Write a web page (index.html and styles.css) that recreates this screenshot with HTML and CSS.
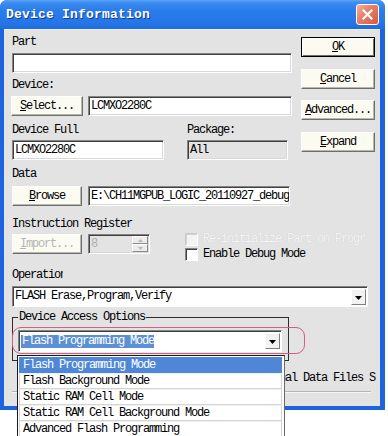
FILE: index.html
```html
<!DOCTYPE html>
<html>
<head>
<meta charset="utf-8">
<link rel="stylesheet" href="styles.css">
</head>
<body>
<div class="window">
  <div class="titlebar">
    <span class="title">Device Information</span>
    <span class="close"><svg width="13" height="13" viewBox="0 0 13 13"><path d="M2.5 2.5L10.5 10.5M10.5 2.5L2.5 10.5" stroke="#fff" stroke-width="2.2" stroke-linecap="square"/></svg></span>
  </div>
  <div class="client">
    <div class="top">
      <div class="left">
        <div class="label">Part</div>
        <div class="field part-field mt4"></div>
        <div class="label mt6">Device:</div>
        <div class="row mt4">
          <div class="btn btn-left"><span><u>S</u>elect...</span></div>
          <div class="field dev-field">LCMXO2280C</div>
        </div>
        <div class="row mt8">
          <div class="label full-label">Device Full</div>
          <div class="label">Package:</div>
        </div>
        <div class="row mt3">
          <div class="field full-field">LCMXO2280C</div>
          <div class="field pkg-field">All</div>
        </div>
      </div>
      <div class="right">
        <div class="btn btn-right default"><span><u>O</u>K</span></div>
        <div class="btn btn-right mt12"><span><u>C</u>ancel</span></div>
        <div class="btn btn-right mt11"><span><u>A</u>dvanced...</span></div>
        <div class="btn btn-right mt12"><span><u>E</u>xpand</span></div>
      </div>
    </div>

    <div class="label mt8">Data</div>
    <div class="row mt5">
      <div class="btn btn-left2"><span><u>B</u>rowse</span></div>
      <div class="field data-field">E:\CH11MGPUB_LOGIC_20110927_debug</div>
    </div>

    <div class="label mt12">Instruction Register</div>
    <div class="row ir-row mt3">
      <div class="btn btn-left2 disabled"><span><u>I</u>mport...</span></div>
      <div class="field spin-field">
        <span class="spin-val">8</span>
        <div class="spin">
          <div class="spin-btn"><svg width="5" height="3" viewBox="0 0 5 3"><path d="M0 3L2.5 0L5 3Z" fill="#b8b8b8"/></svg></div>
          <div class="spin-btn"><svg width="5" height="3" viewBox="0 0 5 3"><path d="M0 0L5 0L2.5 3Z" fill="#b8b8b8"/></svg></div>
        </div>
      </div>
      <div class="checks">
        <div class="check-row">
          <span class="checkbox cb-disabled"></span>
          <span class="check-label dis-text">Re-initialize Part on Progr</span>
        </div>
        <div class="check-row mt2">
          <span class="checkbox"></span>
          <span class="check-label">Enable Debug Mode</span>
        </div>
      </div>
    </div>

    <div class="label op-label mt8">Operatio<span class="cut">n</span></div>
    <div class="combo op-combo mt4">
      <span class="combo-text">FLASH Erase,Program,Verify</span>
      <span class="arrow"><svg width="7" height="4" viewBox="0 0 7 4"><path d="M0 0H7L3.5 4Z" fill="#000"/></svg></span>
    </div>

    <fieldset class="group mt4">
      <legend>Device Access Options</legend>
      <div class="combo dao-combo">
        <span class="combo-text"><span class="hl">Flash Programming Mode</span></span>
        <span class="arrow"><svg width="7" height="4" viewBox="0 0 7 4"><path d="M0 0H7L3.5 4Z" fill="#000"/></svg></span>
      </div>
    </fieldset>

    <div class="bottom-row">
      <svg class="tri" width="8" height="9" viewBox="0 0 8 9"><path d="M0 0L8 4.5L0 9Z" fill="#000"/></svg>
      <span class="ext-text">nal Data Files S</span>
    </div>
    <div class="sep"></div>
  </div>

  <div class="annot"></div>

  <div class="list">
    <div class="item selected">Flash Programming Mode</div>
    <div class="item">Flash Background Mode</div>
    <div class="item">Static RAM Cell Mode</div>
    <div class="item">Static RAM Cell Background Mode</div>
    <div class="item">Advanced Flash Programming</div>
  </div>
</div>
</body>
</html>
```

FILE: styles.css
```css
* { box-sizing: border-box; }

html, body {
  min-height: 436px;
}

body {
  margin: 0;
  background: #fff;
  font-family: "Liberation Mono", "DejaVu Sans Mono", monospace;
  font-size: 12px;
  letter-spacing: -1.2px;
  line-height: 13px;
  color: #000;
}

.window {
  position: relative;
  width: 385px;
  height: 410px;
  background: #1d63de;
  border-radius: 7px 7px 0 0;
  padding: 0 5px 4px 4px;
  display: flex;
  flex-direction: column;
}

.titlebar {
  height: 29px;
  margin: 0 -5px 0 -4px;
  padding: 0 6px;
  border-radius: 7px 7px 0 0;
  background: linear-gradient(#5aa2f6 0, #3a8cf0 3px, #2a7deb 10px, #2577e8 22px, #1e6ce0 29px);
  display: flex;
  align-items: center;
}

.title {
  font-weight: bold;
  font-size: 13px;
  letter-spacing: 0.2px;
  color: #fff;
  text-shadow: 1px 1px 0 #0d3c9a;
}

.close {
  margin-left: auto;
  width: 23px;
  height: 21px;
  border: 1px solid #fff;
  border-radius: 3px;
  background: linear-gradient(135deg, #f6b0a0 0, #e8806a 40%, #d85a40 100%);
  display: flex;
  align-items: center;
  justify-content: center;
}

.client {
  flex: 1;
  background: #e3e3e3;
  border-top: 1px solid #f2f2f2;
  padding: 6px 5px 0 8px;
}

.mt2 { margin-top: 2px; }
.mt3 { margin-top: 3px; }
.mt4 { margin-top: 4px; }
.mt5 { margin-top: 5px; }
.mt6 { margin-top: 6px; }
.mt8 { margin-top: 8px; }
.mt11 { margin-top: 11px; }
.mt12 { margin-top: 12px; }

.top {
  display: flex;
  gap: 9px;
}

.left { width: 280px; }

.right {
  width: 74px;
  display: flex;
  flex-direction: column;
  padding-top: 1px;
}

.label {
  height: 13px;
  white-space: nowrap;
}

.row {
  display: flex;
  align-items: flex-start;
}

.field {
  height: 20px;
  background: #fff;
  border: 1px solid;
  border-color: #848484 #ffffff #ffffff #848484;
  box-shadow: inset 1px 1px 0 #404040, inset -1px -1px 0 #d8d8d8;
  padding-left: 2px;
  display: flex;
  align-items: center;
  overflow: hidden;
  white-space: nowrap;
}

.part-field { width: 280px; }
.dev-field { width: 204px; margin-left: 5px; }
.full-label { width: 175px; }
.full-field { width: 152px; }
.pkg-field { width: 101px; margin-left: 23px; background: #e3e3e3; }

.btn {
  height: 20px;
  background: #fbfbf2;
  border: 1px solid;
  border-color: #ffffff #6e6e6e #6e6e6e #ffffff;
  box-shadow: inset -1px -1px 0 #b8b8b0;
  display: flex;
  align-items: center;
  justify-content: center;
  white-space: nowrap;
}

.btn span { padding-top: 1px; }

.btn-left { width: 72px; margin-left: -1px; }
.btn-left2 { width: 70px; margin-right: 6px; }
.btn-right { width: 74px; }

.btn.default {
  border: 1px solid #000;
  box-shadow: inset 1px 1px 0 #fff, inset -1px -1px 0 #6e6e6e;
}

.data-field { width: 202px; }

.ir-row { height: 27px; }

.disabled span,
.disabled {
  color: #b4b4b0;
  text-shadow: 1px 1px 0 #fff;
}

.spin-field {
  width: 62px;
  background: #e3e3e3;
  padding-right: 1px;
}

.spin-val {
  color: #b0b0b0;
  flex: 1;
}

.spin {
  width: 16px;
  height: 16px;
  display: flex;
  flex-direction: column;
}

.spin-btn {
  flex: 1;
  background: #ececec;
  border: 1px solid;
  border-color: #fff #8a8a8a #8a8a8a #fff;
  display: flex;
  align-items: center;
  justify-content: center;
}

.checks {
  margin-left: 35px;
  margin-top: -1px;
}

.check-row {
  display: flex;
  align-items: center;
  height: 13px;
}

.checkbox {
  width: 13px;
  height: 13px;
  background: #fff;
  border: 1px solid;
  border-color: #848484 #ffffff #ffffff #848484;
  box-shadow: inset 1px 1px 0 #404040;
}

.cb-disabled {
  background: #f4f4f4;
  border-color: #c8c8c8 #fff #fff #c8c8c8;
  box-shadow: inset 1px 1px 0 #d4d4d4;
}

.check-label {
  margin-left: 5px;
  white-space: nowrap;
}

.dis-text {
  color: #f6f6f6;
  text-shadow: 0 0 1px #c0c0c0;
}

.op-label {
  display: flex;
}

.cut {
  display: inline-block;
  width: 3px;
  overflow: hidden;
}

.combo {
  display: flex;
  align-items: center;
  background: #fff;
  border: 1px solid;
  border-color: #848484 #ffffff #ffffff #848484;
  box-shadow: inset 1px 1px 0 #404040;
  padding: 2px 1px 2px 2px;
  white-space: nowrap;
}

.combo-text { flex: 1; overflow: hidden; }

.op-combo { width: 356px; height: 21px; }

.arrow {
  width: 15px;
  height: 16px;
  background: #f2f2f2;
  border: 1px solid;
  border-color: #ffffff #808080 #808080 #ffffff;
  display: flex;
  align-items: flex-end;
  justify-content: center;
  padding-bottom: 4px;
}

.group {
  width: 277px;
  margin-left: 0;
  margin-right: 0;
  padding: 0 0 8px 5px;
  border: 1px solid #2c2c2c;
  min-inline-size: 0;
}

.group legend {
  padding: 0 1px;
  height: 13px;
  line-height: 13px;
}

.dao-combo {
  width: 264px;
  height: 22px;
  margin-top: 6px;
}

.hl {
  background: #5d8fd4;
  color: #fff;
  padding: 2px 0 2px 1px;
}

.bottom-row {
  height: 13px;
  margin-top: 11px;
  margin-left: -8px;
  display: flex;
  align-items: center;
}

.ext-text {
  margin-left: 275px;
  white-space: nowrap;
}

.sep {
  margin-top: 6px;
  margin-right: 4px;
  height: 2px;
  border-top: 1px solid #b4b4b4;
  border-bottom: 1px solid #f6f6f6;
}

.annot {
  position: absolute;
  left: 12px;
  top: 327px;
  width: 293px;
  height: 27px;
  border: 1px solid #d0607e;
  border-radius: 9px;
}

.list {
  position: absolute;
  left: 17px;
  top: 355px;
  width: 268px;
  background: #fff;
  border: 1px solid #1a1a1a;
  border-right-color: #6a6a6a;
  padding: 1px 2px 0 1px;
}

.item {
  height: 16px;
  padding-left: 3px;
  display: flex;
  align-items: center;
  white-space: nowrap;
  border: 1px solid #d4d4d4;
  border-top-color: #f0f0f0;
}

.item.selected {
  background: #4f87d6;
  color: #fff;
  border-color: #4f87d6;
}
```
